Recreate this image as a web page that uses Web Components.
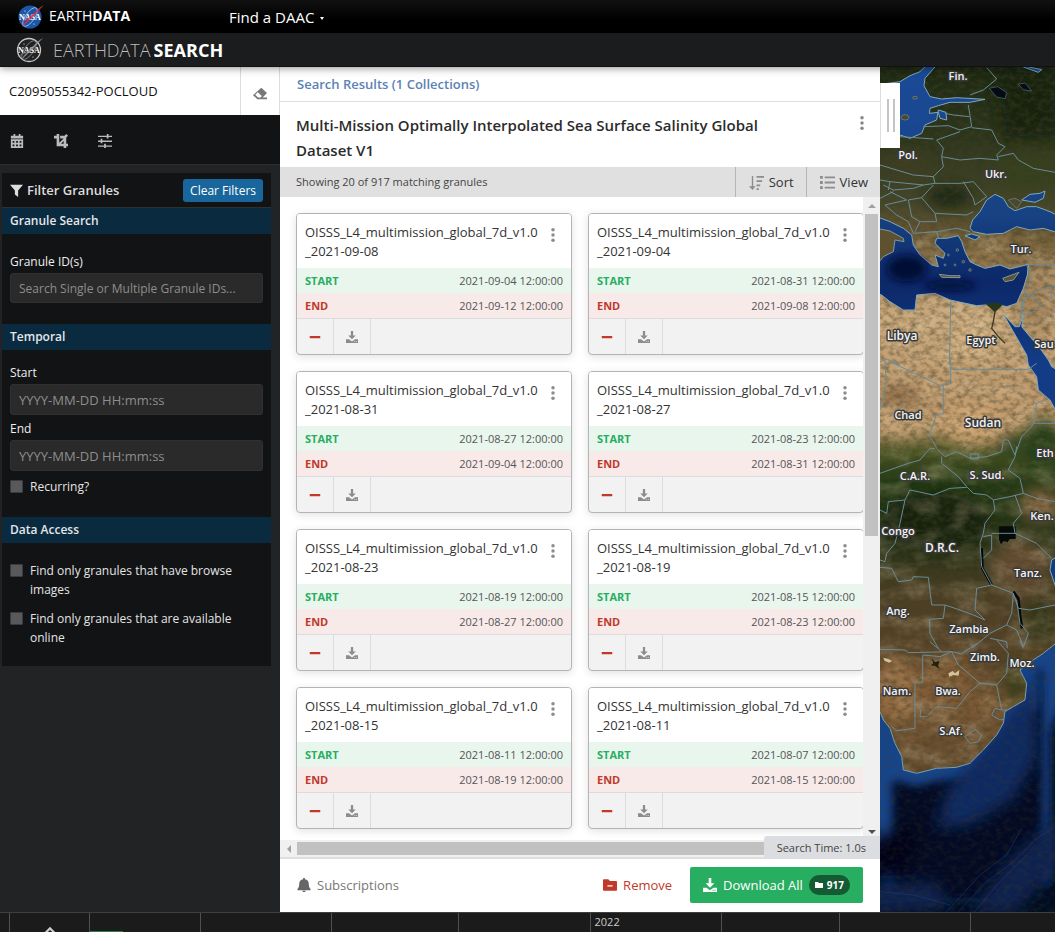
<!DOCTYPE html>
<html lang="en">
<head>
<meta charset="utf-8">
<title>Earthdata Search</title>
<style>
  html, body { margin: 0; height: 100%; }
  body { font-family: "Open Sans", "Noto Sans", sans-serif; font-size: 13px; color: #333; overflow: hidden; }
</style>
</head>
<body>
<search-app></search-app>
<script>
const define = (name, html) => customElements.define(name, class extends HTMLElement {
  constructor() {
    super();
    this.attachShadow({ mode: 'open' }).innerHTML =
      typeof html === 'function' ? html(this) : html;
  }
});
const component = (name, render) => customElements.define(name, class extends HTMLElement {
  connectedCallback() {
    if (!this.shadowRoot) this.attachShadow({ mode: 'open' }).innerHTML = render(this);
  }
});

const ICONS = {
  calendar: '<path d="M4 0h2v2h4V0h2v2h3v3H1V2h3zM1 6h14v10H1zM3 8v2h2V8zm4 0v2h2V8zm4 0v2h2V8zM3 12v2h2v-2zm4 0v2h2v-2zm4 0v2h2v-2z" fill-rule="evenodd"/>',
  crop: '<path d="M3 0h3v10l5-5H7V2h5l2-2 2 2-2 2v7h2v3h-2v2h-3v-2H3V5H0V2h3zM8 11h3V8z"/>',
  sliders: '<path d="M0 2h16v1.500H0zM0 7.500h16V9H0zM0 13h16v1.500H0zM10 0h2v5h-2zM3 5.500h2v5H3zM7 11h2v5H7z"/>',
  eraser: '<path d="M9.500 2 16 8l-5 5h5v2H5l-5-4.500zM5.500 7 2.500 10l3.300 3h3L10 11.500z" fill-rule="evenodd"/>',
  filter: '<path d="M0 1h16l-6 7v8l-4-3V8z"/>',
  minus: '<path d="M1 6.500h14v3H1z"/>',
  download: '<path d="M6.500 0h3v6H13l-5 5-5-5h3.500zM0 11h4l4 3 4-3h4v5H0zm11 2.500v1h1.200v-1zm2.200 0v1h1.200v-1z" fill-rule="evenodd"/>',
  dots: '<circle cx="8" cy="2" r="2"/><circle cx="8" cy="8" r="2"/><circle cx="8" cy="14" r="2"/>',
  sort: '<path d="M3 1h1.500v11H7l-3.300 4L0 12h3zM8 1h8v2H8zm0 4.500h6v2H8zM8 10h4v2H8zm0 4h2.500v2H8z"/>',
  list: '<path d="M0 1h3v3H0zM0 6.500h3v3H0zM0 12h3v3H0zM5 1.500h11v2H5zM5 7h11v2H5zM5 12.500h11v2H5z"/>',
  bell: '<path d="M7 0h2v1.500c3 .6 4.500 2.500 4.500 5.500 0 3 1 4.500 2 5.500V14H.5v-1.500c1-1 2-2.500 2-5.500 0-3 1.500-4.900 4.500-5.500zM6 14.500h4c0 2-4 2-4 0z"/>',
  folderminus: '<path d="M0 2.500q0-1 1-1h5l2 2h7q1 0 1 1v9q0 1-1 1H1q-1 0-1-1zM5 8.300v1.500h6V8.300z" fill-rule="evenodd"/>',
  folder: '<path d="M0 2h6l2 2h8v10H0z"/>',
  up: '<path d="m1 12 7-7 7 7" fill="none" stroke="currentColor" stroke-width="2.500"/>'
};
component('app-icon', el => `<style>
  :host{display:inline-block;width:var(--size,14px);height:var(--size,14px);flex:none}
  svg{display:block;width:100%;height:100%;fill:currentColor}</style>
  <svg viewBox="0 0 16 16" aria-hidden="true">${ICONS[el.getAttribute('name')]}</svg>`);

component('nasa-logo', el => {
  const mono = el.hasAttribute('mono');
  return `<style>:host{display:block;width:28px;height:26px}svg{display:block}text{font:700 8px "Liberation Serif",serif}</style>
  <svg width="28" height="26" viewBox="0 0 28 26" role="img" aria-label="NASA">
    <circle cx="13" cy="13" r="11.500" fill="${mono ? '#222' : '#1c57a5'}" ${mono ? 'stroke="#c8c8c8" stroke-width="1.300"' : ''}/>
    <ellipse cx="13" cy="13" rx="11" ry="4.500" transform="rotate(-55 13 13)" fill="none" stroke="${mono ? '#888' : '#a9c3e6'}" stroke-width=".8"/>
    <circle cx="8" cy="7" r=".6" fill="#fff"/><circle cx="17" cy="20" r=".6" fill="#fff"/>
    <text x="2" y="16" fill="#fff">NASA</text>
    <path d="M1 20C7 16 9 16 13 12.500 19 8 22 3 27 1c-4 4-7 8-11 12-5 4-7 7-11 10 3-5 5-7 8-10C9 17 5 18 1 20z" fill="${mono ? '#999' : '#e0304a'}" opacity=".8"/>
  </svg>`;
});

define('site-header', `<style>
  :host{display:block;color:#fff;flex:none;position:relative;z-index:3;box-shadow:0 1px 8px rgba(0,0,0,.45)}
  .top{height:33px;display:flex;align-items:center;background:linear-gradient(#111,#000 60%);padding-left:17px;box-sizing:border-box}
  .top nasa-logo{margin-right:4px}
  a{color:inherit;text-decoration:none;white-space:nowrap}
  .brand{font-size:14px;width:180px;padding-bottom:2px}
  .daac{font-size:15px;display:flex;align-items:center;gap:6px}
  .daac i{border:2px solid transparent;border-top:3px solid #fff;border-bottom:0;margin-top:4px}
  .app{height:34px;display:flex;align-items:center;gap:9px;background:#1b1c1d;padding-left:16px;box-sizing:border-box;border-bottom:1px solid #111;font-size:18px;color:#bbb}
  .app .t{font-weight:300}
  b{color:#fff;font-weight:700}
  .app b{margin-left:3px}
</style>
<div class="top"><nasa-logo></nasa-logo><a class="brand" href="#">EARTH<b>DATA</b></a><a class="daac" href="#">Find a DAAC <i></i></a></div>
<div class="app"><nasa-logo mono></nasa-logo><a class="t" href="#">EARTHDATA<b>SEARCH</b></a></div>`);

component('filter-section', el => `<style>
  :host{display:block}
  h3{margin:0;background:#0a2a40;color:#e4e7ea;font-size:12px;font-weight:600;line-height:26px;padding:0 8px}
  div{padding:var(--pad,12px 8px 21px)}
</style><h3>${el.getAttribute('heading')}</h3><div><slot></slot></div>`);

component('text-field', el => `<style>
  :host{display:block}
  label{display:block;font-size:12px;line-height:22px;color:#eee}
  input{display:block;box-sizing:border-box;width:100%;height:var(--ih,31px);border:1px solid #303030;border-radius:3px;background:#2a2a2a;color:#eee;padding:0 8px;font:inherit;font-size:var(--fs,13px);outline:0}
  input::placeholder{color:#8d8d8d;opacity:1}
</style><label for="f">${el.getAttribute('label')}</label><input id="f" type="text" placeholder="${el.getAttribute('placeholder')}">`);

component('check-field', el => `<style>
  :host{display:block}
  label{display:flex;gap:7px;font-size:12px;line-height:19px;color:#e4e4e4}
  input{appearance:none;flex:none;width:13px;height:13px;margin:3px 0;background:#59595b;border:1px solid #3c3c3e;border-radius:1px}
</style><label><input type="checkbox"><span><slot></slot></span></label>`);

define('side-bar', `<style>
  :host{display:flex;flex-direction:column;width:280px;flex:none;background:#222325;color:#eee}
  .search{display:flex;height:48px;background:#fff}
  .search input{flex:1;min-width:0;border:0;outline:0;padding:0 9px;font:inherit;color:#111;background:#fff}
  button{font:inherit;border:0;background:none;padding:0;color:inherit;display:flex;align-items:center;justify-content:center}
  .search button{width:40px;border-left:1px solid #ddd;border-right:1px solid #ddd;color:#777;padding-top:3px;box-sizing:border-box}
  .tools{display:flex;align-items:center;height:50px;background:#121315;border-bottom:1px solid #2c2d2f;padding:2px 0 0 10px;gap:30px;color:#bbb;box-sizing:border-box}
  .panel{margin:8px 9px 0 2px;background:#121315}
  .head{display:flex;align-items:center;justify-content:space-between;height:34px;padding:0 8px;border-bottom:1px solid #2e3032}
  h2{margin:0;font-size:13px;font-weight:600;display:flex;align-items:center;gap:4px;--size:13px;color:#ddd}
  .clear{background:#18669c;border-radius:3px;height:23px;padding:0 7px;font-size:12px;color:#fff}
  .ids{--fs:12px;--ih:30px;--pad:17px 8px 21px}
  .online{margin-top:10px}
  .access{--pad:18px 8px 19px}
  .rec{margin-top:6px}
  .end{margin-top:3px}
</style>
<div class="search"><input type="text" aria-label="Search collections" value="C2095055342-POCLOUD"><button aria-label="Clear search"><app-icon name="eraser"></app-icon></button></div>
<div class="tools"><button aria-label="Temporal"><app-icon name="calendar"></app-icon></button><button aria-label="Spatial"><app-icon name="crop"></app-icon></button><button aria-label="Advanced search"><app-icon name="sliders"></app-icon></button></div>
<div class="panel">
  <div class="head"><h2><app-icon name="filter"></app-icon>Filter Granules</h2><button class="clear">Clear Filters</button></div>
  <filter-section class="ids" heading="Granule Search"><text-field label="Granule ID(s)" placeholder="Search Single or Multiple Granule IDs..."></text-field></filter-section>
  <filter-section heading="Temporal">
    <text-field label="Start" placeholder="YYYY-MM-DD HH:mm:ss"></text-field>
    <text-field class="end" label="End" placeholder="YYYY-MM-DD HH:mm:ss"></text-field>
    <check-field class="rec">Recurring?</check-field>
  </filter-section>
  <filter-section class="access" heading="Data Access">
    <check-field>Find only granules that have browse images</check-field>
    <check-field class="online">Find only granules that are available online</check-field>
  </filter-section>
</div>`);

component('granule-card', el => `<style>
  :host{display:flex;flex-direction:column;box-sizing:border-box;height:142px;border:1px solid #b3b3b8;border-radius:4px;background:#f2f2f2;overflow:hidden;box-shadow:0 2px 8px rgba(0,0,0,.12)}
  header{display:flex;justify-content:space-between;height:54px;box-sizing:border-box;padding:9px 11px 0 8px;background:#fff}
  h4{margin:0;font-size:13px;font-weight:400;line-height:19px;color:#333}
  button{border:0;background:none;padding:0;color:#8c8c8c;display:flex;align-items:center;justify-content:center}
  header button{height:24px;--size:14px}
  dl{margin:0}
  dl div{display:flex;justify-content:space-between;align-items:center;height:25px;padding:0 8px;font-size:11px}
  dt{font-weight:700} dd{margin:0;color:#555;font-size:11px}
  .s{background:#e9f6ee}.s dt{color:#27ae60}
  .e{background:#f9eaea}.e dt{color:#c0392b}
  footer{display:flex;flex:1;border-top:1px solid #dcdcdf}
  footer button{width:37px;border-right:1px solid #dcdcdf;box-sizing:border-box;--size:12px}
  footer .rm{color:#c0392b}
</style>
<header><h4>OISSS_L4_multimission_global_7d_v1.0<wbr>_${el.dataset.id}</h4><button aria-label="More actions"><app-icon name="dots"></app-icon></button></header>
<dl><div class="s"><dt>START</dt><dd>${el.dataset.start} 12:00:00</dd></div><div class="e"><dt>END</dt><dd>${el.dataset.end} 12:00:00</dd></div></dl>
<footer><button class="rm" aria-label="Remove granule"><app-icon name="minus"></app-icon></button><button aria-label="Download granule"><app-icon name="download"></app-icon></button></footer>`);

const GRANULES = [
  ['2021-09-08','2021-09-04','2021-09-12'],['2021-09-04','2021-08-31','2021-09-08'],
  ['2021-08-31','2021-08-27','2021-09-04'],['2021-08-27','2021-08-23','2021-08-31'],
  ['2021-08-23','2021-08-19','2021-08-27'],['2021-08-19','2021-08-15','2021-08-23'],
  ['2021-08-15','2021-08-11','2021-08-19'],['2021-08-11','2021-08-07','2021-08-15']];

define('results-panel', () => `<style>
  :host{display:flex;flex-direction:column;width:600px;flex:none;background:#fff;position:relative}
  button{font:inherit;border:0;background:none;padding:0;color:inherit;display:flex;align-items:center;justify-content:center}
  nav{height:34px;display:flex;align-items:center;padding:0 17px;border-bottom:1px solid #ddd}
  nav a{color:#5b82b5;font-weight:600;text-decoration:none;font-size:13px}
  .title{display:flex;justify-content:space-between;padding:11px 11px 4px 16px}
  h1{margin:0;font-size:15px;line-height:25px;font-weight:600;color:#2b2b2b;max-width:500px}
  .title button{height:20px;width:14px;color:#888;--size:14px}
  .bar{display:flex;height:30px;background:#e0e0e0;align-items:stretch;padding-left:16px;font-size:11px;color:#444}
  .bar p{margin:0;flex:1;line-height:30px}
  .bar button{border-left:1px solid #b5b5b5;font-size:13px;color:#333;gap:5px;padding:0 12px 0 13px;--size:15px}
  .bar button app-icon{color:#8c8c8c}
  .scroll{flex:1;min-height:0;display:grid;grid-template-columns:1fr 17px;grid-template-rows:1fr 17px}
  .list{overflow:hidden;min-width:0;padding:16px;display:grid;grid-template-columns:276px 276px;grid-auto-rows:142px;gap:16px}
  .v{background:#f0f0f0;display:flex;flex-direction:column;align-items:center;justify-content:space-between}
  .v .thumb{flex:0 0 50%;width:13px;background:#c1c1c1;margin-bottom:auto}
  .h{grid-column:1/3;background:#f0f0f0;display:flex;align-items:center}
  .h .thumb{flex:1;height:13px;background:#c1c1c1;margin-right:17px}
  .cap{width:17px;height:17px;display:flex;align-items:center;justify-content:center}
  .cap i{border:4px solid transparent}
  .u i{border-top:0;border-bottom-color:#a0a0a0}.d i{border-bottom:0;border-top-color:#505050}.l i{border-left:0;border-right-color:#a0a0a0}
  .time{position:absolute;right:0;bottom:53px;background:#dcdde0;border-radius:3px 0 0 0;line-height:23px;padding:0 14px 0 13px;font-size:11px;color:#444}
  footer{flex:none;height:55px;box-sizing:border-box;border-top:2px solid #dedede;display:flex;align-items:center;padding:0 17px 2px}
  .sub{color:#777;gap:6px;margin-right:auto} .sub app-icon{color:#666}
  .rem{color:#c0392b;gap:6px;margin-right:18px}
  .all{background:#27ae60;color:#fff;height:36px;border-radius:2px;padding:0 13px;gap:6px}
  .all span{display:flex;align-items:center;gap:4px;background:#145a32;border-radius:10px;height:20px;padding:0 6px;font-size:10px;font-weight:700;--size:8px}
  .grip{position:absolute;left:600px;top:16px;width:20px;height:65px;background:#fff;gap:4px;border-left:1px solid #ddd;box-sizing:border-box}
  .grip i{width:2px;height:33px;background:#c4c4c4}
</style>
<nav><a href="#">Search Results (1 Collections)</a></nav>
<div class="title"><h1>Multi-Mission Optimally Interpolated Sea Surface Salinity Global Dataset V1</h1><button aria-label="More actions"><app-icon name="dots"></app-icon></button></div>
<div class="bar"><p>Showing 20 of 917 matching granules</p><button><app-icon name="sort"></app-icon>Sort</button><button><app-icon name="list"></app-icon>View</button></div>
<div class="scroll">
  <div class="list">${GRANULES.map(g => `<granule-card data-id="${g[0]}" data-start="${g[1]}" data-end="${g[2]}"></granule-card>`).join('')}</div>
  <div class="v"><div class="cap u"><i></i></div><div class="thumb"></div><div class="cap d"><i></i></div></div>
  <div class="h"><div class="cap l"><i></i></div><div class="thumb"></div></div>
</div>
<div class="time">Search Time: 1.0s</div>
<footer><button class="sub"><app-icon name="bell"></app-icon>Subscriptions</button><button class="rem"><app-icon name="folderminus"></app-icon>Remove</button><button class="all"><app-icon name="download"></app-icon>Download All<span><app-icon name="folder"></app-icon>917</span></button></footer>
<button class="grip" aria-label="Resize panel"><i></i><i></i></button>`);

const LABELS = [
  ['Fin.',78,13,11],['Pol.',28,92,11],['Ukr.',116,111,11],['Tur.',141,186,11],['Libya',22,273,12],['Egypt',101,277,11],['Sau',164,281,11],
  ['Chad',28,352,11],['Sudan',103,360,12],['Eth',165,390,11],['C.A.R.',35,413,11],['S. Sud.',107,412,11],['Congo',18,468,11],['Ken.',162,453,11],
  ['D.R.C.',62,485,12],['Tanz.',148,510,11],['Ang.',18,548,11],['Zambia',89,566,11],['Zimb.',105,594,11],['Moz.',142,600,11],['Nam.',17,628,11],['Bwa.',68,628,11],['S.Af.',71,668,11]];

define('world-map', () => `<style>
  :host{display:block;flex:1;min-width:0;overflow:hidden;background:#03071c}
  svg{display:block;width:100%;height:100%}
  text{font-weight:600;text-anchor:middle;fill:#f4f4f4;stroke:#3a3a3a;stroke-width:3px;paint-order:stroke;stroke-linejoin:round}
  .b{fill:none;stroke:#6a8c98;stroke-width:3;stroke-linejoin:round}
  .sea{fill:url(#sea);stroke:#7fa9ba;stroke-width:3}
</style>
<svg viewBox="0 0 175 845" preserveAspectRatio="xMinYMin slice" role="img" aria-label="Map of Africa and Europe">
<defs>
  <linearGradient id="land" gradientUnits="userSpaceOnUse" x1="0" y1="0" x2="0" y2="2200">
    <stop offset="0" stop-color="#1b2811"/><stop offset=".1" stop-color="#2c361b"/><stop offset=".19" stop-color="#45472a"/><stop offset=".235" stop-color="#6d5a35"/>
    <stop offset=".3" stop-color="#b49468"/><stop offset=".34" stop-color="#c9a87c"/><stop offset=".49" stop-color="#bb9669"/><stop offset=".53" stop-color="#43501f"/>
    <stop offset=".57" stop-color="#203a14"/><stop offset=".66" stop-color="#283217"/><stop offset=".72" stop-color="#4a3e23"/><stop offset=".82" stop-color="#5c4529"/><stop offset=".87" stop-color="#7c5a36"/><stop offset="1" stop-color="#544025"/>
  </linearGradient>
  <linearGradient id="sea" gradientUnits="userSpaceOnUse" x1="0" y1="0" x2="0" y2="900">
    <stop offset="0" stop-color="#1b4a98"/><stop offset=".5" stop-color="#174283"/><stop offset=".72" stop-color="#0c2868"/><stop offset="1" stop-color="#143c86"/>
  </linearGradient>
  <filter id="soft" x="-60%" y="-60%" width="220%" height="220%"><feGaussianBlur stdDeviation="22"/></filter>
  <filter id="soft2" x="-60%" y="-60%" width="220%" height="220%"><feGaussianBlur stdDeviation="12"/></filter>
  <filter id="grain" x="0" y="0" width="100%" height="100%"><feTurbulence type="fractalNoise" baseFrequency=".05 .07" numOctaves="5" seed="7"/><feColorMatrix values="0 0 0 0 .06  0 0 0 0 .05  0 0 0 0 .02  1.600 0 0 0 -.62"/></filter>
  <filter id="light" x="0" y="0" width="100%" height="100%"><feTurbulence type="fractalNoise" baseFrequency=".012 .02" numOctaves="5" seed="3"/><feColorMatrix values="0 0 0 0 .85  0 0 0 0 .68  0 0 0 0 .45  0 1.800 0 0 -.75"/></filter>
  <clipPath id="ocean"><path id="oc" d="M555 1737 520 1765 490 1785 450 1815 460 1835 470 1855 465 1905 430 1925 405 1940 400 1975 380 2010 340 2055 300 2095 260 2107 200 2110 140 2125 100 2115 95 2075 75 2035 60 1990 40 1965 30 1940V2545H555Z"/></clipPath>
</defs>
<g transform="translate(-10 -2) scale(.33333)">
  <path d="M0 0H600V2600H0Z" fill="url(#land)"/>
  <g filter="url(#soft)">
    <path d="M380 10H560V220H400Z" fill="#13200d"/><ellipse cx="480" cy="320" rx="120" ry="50" fill="#363f1f"/>
    <ellipse cx="240" cy="395" rx="70" ry="30" fill="#18230f"/><ellipse cx="400" cy="560" rx="110" ry="35" fill="#8a7047"/>
    <ellipse cx="100" cy="300" rx="80" ry="30" fill="#3d3c20"/>
    <ellipse cx="500" cy="720" rx="60" ry="90" fill="#a28259"/><ellipse cx="310" cy="820" rx="70" ry="60" fill="#d6b484"/>
    <ellipse cx="90" cy="1000" rx="60" ry="35" fill="#8d6b45"/>
    <ellipse cx="90" cy="1070" rx="90" ry="45" fill="#c3a173"/><ellipse cx="310" cy="1080" rx="90" ry="60" fill="#cfa46f"/>
    <ellipse cx="520" cy="1140" rx="60" ry="80" fill="#233d12"/><ellipse cx="420" cy="1140" rx="60" ry="25" fill="#28401a"/>
    <ellipse cx="200" cy="1370" rx="160" ry="90" fill="#162411"/><ellipse cx="510" cy="1320" rx="60" ry="50" fill="#80603e"/>
    <ellipse cx="450" cy="1500" rx="90" ry="80" fill="#654d30"/><ellipse cx="510" cy="1670" rx="50" ry="70" fill="#303518"/>
    <ellipse cx="80" cy="1870" rx="60" ry="100" fill="#966d43"/><ellipse cx="230" cy="1850" rx="90" ry="80" fill="#805c35"/><ellipse cx="440" cy="1850" rx="35" ry="70" fill="#353a19"/>
  </g>
  <path d="M0 500H600V1110H0ZM0 1300H600V2200H0Z" filter="url(#light)" opacity=".35"/>
  <path d="M0 0H600V2600H0Z" filter="url(#grain)" opacity=".7"/>
  <path class="sea" d="M20 60 90 50 120 32 150 20 170 0H200L165 40 162 62 180 95 215 102 260 98 345 103 300 112 240 112 205 122 180 130 178 145 205 142 210 160 230 165 228 142 205 135 200 165 165 180 155 205 120 220 90 210 20 200Z"/>
  <path class="sea" d="M308 465 330 440 350 405 375 388 400 400 415 425 435 437 470 425 500 425 540 440 570 455V505L520 490 480 495 440 485 400 505 350 508 310 500 300 490Z"/>
  <path class="sea" d="M455 405 480 388 510 385 525 378 520 400 495 412ZM285 512 305 507 330 515 315 525ZM450 0 515 14 505 22 460 6Z"/>
  <path class="sea" d="M20 455 60 470 100 490 125 510 130 540 150 570 185 600 205 605 195 570 220 580 225 565 195 535 200 520 230 520 265 512 275 530 285 560 300 590 320 600 345 610 390 600 420 612 475 598 472 630 460 670 440 715 410 725 380 718 345 720 320 722 240 705 195 685 140 690 135 735 100 735 60 710 35 690 20 685Z"/>
  <g filter="url(#soft2)" fill="#050b35"><ellipse cx="110" cy="610" rx="60" ry="40"/><ellipse cx="240" cy="662" rx="80" ry="14"/></g>
  <path d="M20 490 60 498 100 520 102 530 75 525 70 560 40 575 20 600ZM208 628 240 632 270 632 270 638 215 637ZM398 640 447 622 430 645 405 650Z" fill="#5d512f" stroke="#7d99a0" stroke-width="3"/>
  <g fill="#4b4828" stroke="#6d8f9e" stroke-width="2"><circle cx="235" cy="570" r="3"/><circle cx="280" cy="590" r="4"/><circle cx="300" cy="615" r="4"/><circle cx="255" cy="600" r="3"/><circle cx="225" cy="600" r="3"/><circle cx="262" cy="555" r="4"/><ellipse cx="105" cy="157" rx="12" ry="8"/><ellipse cx="135" cy="98" rx="8" ry="4"/><path d="M415 405 435 400 455 410 440 430Z"/></g>
  <path class="sea" d="M400 748 430 800 470 870 475 900 500 935 505 975 540 1005 570 1060V920L545 905 535 885 510 850 480 815 455 785 460 750 448 785 435 785Z"/>
  <path d="M345 715 375 713 400 718 375 742Z" fill="#28361c"/><path d="M375 740 370 770 365 790 385 815 405 835" fill="none" stroke="#3d3820" stroke-width="4"/>
  <path d="m358 70 25-5 27 18-5 18-25-5ZM445 58l20-4 20 24-25-4Z" fill="#040b14" stroke="#52707a" stroke-width="2"/><path d="M387 1384h50v38h-18l-6 10-12-4-8 10-6-14z" fill="#060b0a"/>
  <path d="M335 1450 337 1510 365 1560M430 1580 445 1600 450 1650 456 1690" fill="none" stroke="#03070d" stroke-width="8"/>
  <path class="sea" d="M570 1470 545 1485 540 1515 555 1560 570 1590Z"/>
  <path class="b" d="M350 8 380 42 340 75 300 90M295 120 305 185 270 195 235 182 160 185M225 145 250 150 298 155M305 188 365 195 385 235 405 245 380 270 385 285 330 280 270 285 215 275 220 250 200 225 270 200M90 215 190 222M385 275 430 265 445 285 490 310 555 322M30 300 80 315 130 330 190 335 195 355 160 360 60 350M190 335 220 305 215 275M195 355 270 355 310 350 350 395 315 420 310 400 280 350M190 360 155 398 195 445 290 450 310 440M155 398 115 405 125 455 150 470 200 470 195 445M60 380 110 405 45 420 80 450 115 470M115 470 130 505 200 500 205 520M150 470 135 500M200 500 260 490 300 500M40 360 70 375 130 370 160 360M30 400 70 380M30 345 60 350 55 375M475 598 510 600 555 600M475 690 520 670 555 665M460 750 490 740 515 720 500 705 475 690 455 715 450 755M540 665 545 700M470 600 485 640 465 680 455 750M242 710 238 900M30 890 50 882 90 900"/>
  <g class="b" transform="translate(0 885)"><path d="M242 0V28H475L500 10M242 28V72H220V162H200L178 225 200 265 225 290 260 275 300 295 350 290 395 275 400 240 415 240 435 285 455 230 485 200 490 190 500 130 520 120M60 5 218 80M45 0 48 60 40 120 32 150M490 190 555 190M30 340 115 310 150 300 180 265H195M215 290 215 310 265 350 290 380 310 400 350 405 370 420 420 410 460 400 450 355 415 330 435 290 440 260M290 382 240 385 190 405 120 390 105 420 55 425 50 460 30 450M105 420 90 490 75 550 50 580 45 605 30 600M460 400 500 415 555 425M370 420 375 450 345 490 340 520 330 550 335 620 365 675 320 685 315 750 345 780M365 520H435L430 490 455 460 435 405M435 520 500 550 545 595M340 530 365 525 365 570 340 595M30 622 65 625 85 665 125 660 130 650 175 652 185 735 225 735 220 775 178 778 180 820 205 865M225 735 270 750 310 765 345 780M365 675 430 700 445 745 480 750 555 735M430 700 425 760 410 795 360 820 330 845 305 865M410 795 440 810 460 860 475 820 450 790 440 720M360 835 410 845 412 865M302 282H325V297H302Z"/></g>
  <g class="b" transform="translate(0 1725)"><path d="M30 28 105 30 115 38 245 35 275 42 320 10M158 45V127H135V265L80 272 65 260M160 45 210 50 245 35 265 75 290 95 330 130 380 135 410 100 415 40 380 0M330 130 300 155 260 205 200 200 170 230 150 230 152 210 135 188M380 135 395 210 375 205 365 225 390 240 412 235 412 210H395M285 290 315 268 335 285 325 305 300 310ZM180 5 215 35M450 0 460 25"/></g>
  <g clip-path="url(#ocean)"><path d="M0 1700H600V2600H0Z" fill="#030a24"/>
    <use href="#oc" fill="none" stroke="#14458c" stroke-width="75" filter="url(#soft2)"/>
    <path d="M0 2250V2600H600V1850L540 2000V2450L400 2500H60Z" fill="#030a24" filter="url(#soft2)"/>
    <g filter="url(#soft)"><path d="M430 1925 500 1820 500 2080 430 2200 300 2280 200 2290 230 2180Z" fill="#0c2b64"/><path d="M300 2545 420 2380 570 2250V2400L430 2545Z" fill="#0b2150"/><path d="M0 2320 150 2290 90 2440 0 2430Z" fill="#000414"/><path d="M0 2460 200 2450 240 2530 0 2545Z" fill="#0a2350"/></g>
    <path d="M230 2540 330 2430 410 2370 455 2290M260 2545 350 2450 430 2390 500 2320 550 2290M310 2545 390 2450 470 2370M30 2480 130 2490 240 2520" fill="none" stroke="#1e427b" stroke-width="3" opacity=".5"/>
    <path d="M0 1700H600V2600H0Z" filter="url(#grain)" opacity=".35"/></g>
  <path d="M555 1737 520 1765 490 1785 450 1815 460 1835 470 1855 465 1905 430 1925 405 1940 400 1975 380 2010 340 2055 300 2095 260 2107 200 2110 140 2125 100 2115 95 2075 75 2035 60 1990 40 1965 30 1940" fill="none" stroke="#7aa2aa" stroke-width="3"/>
  <path d="M235 1825 248 1818 255 1825 268 1815 266 1832 250 1830 238 1835ZM40 1778 55 1782 66 1788 58 1793 44 1788Z" fill="#d3c39a"/><path d="m185 1780 10 12 14-5-5 15 5 10-15-10-12 0 8-8Z" fill="#20210f"/>
</g>
${LABELS.map(l => `<text x="${l[1]}" y="${l[2]}" font-size="${l[3]}">${l[0]}</text>`).join('')}
</svg>`);

define('time-line', `<style>
  :host{display:grid;flex:none;height:19px;overflow:hidden;background:#1b1b1b;border-top:1px solid #3e3e3e;grid-template-columns:9px 80px 111fr 131fr 127fr 131fr 131fr 118fr 131fr 85fr;color:#ccc;font-size:11px}
  div,button{border:0;border-left:1px solid #505050;box-sizing:border-box;background:none;padding:0 4px;line-height:17px;color:inherit}
  div:first-of-type{border:0}
  button{display:flex;align-items:start;justify-content:center;padding-top:11px;--size:14px}
  .range::after{content:"";display:block;width:33px;height:1px;margin:18px 0 0 -4px;background:#2a7d4b}
</style>
<div></div><button aria-label="Expand timeline"><app-icon name="up"></app-icon></button><div class="range"></div><div></div><div></div><div></div><div>2022</div><div></div><div></div><div></div>`);

define('search-app', `<style>
  :host{display:flex;flex-direction:column;height:100vh;min-height:0}
  main{flex:1;display:flex;min-height:0}
</style>
<site-header></site-header><main><side-bar></side-bar><results-panel></results-panel><world-map></world-map></main><time-line></time-line>`);
</script>
</body>
</html>
